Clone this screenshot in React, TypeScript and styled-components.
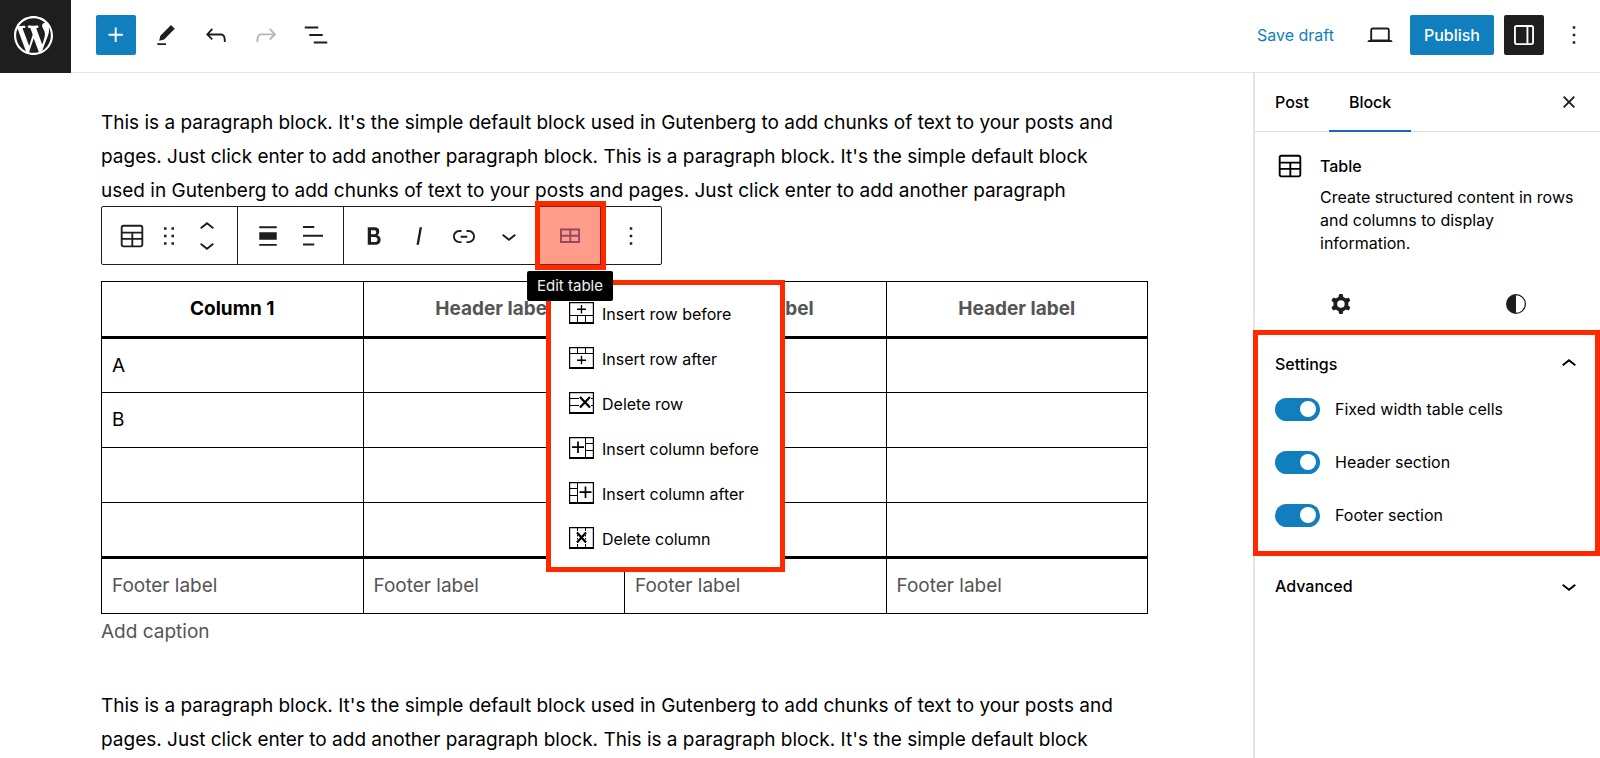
import React from "react";
import styled, { createGlobalStyle, css } from "styled-components";

const color = {
  ink: "#1e1e1e",
  text: "#000",
  muted: "#555",
  line: "#e4e4e4",
  accent: "#117ebd",
  pressed: "#3a62b4",
  mark: "#ff2900",
};

const GlobalStyle = createGlobalStyle`
  *, *::before, *::after { box-sizing: border-box; }
  body {
    margin: 0;
    background: #fff;
    color: ${color.text};
    font-family: Inter, "Noto Sans", sans-serif;
    font-size: 16px;
  }
  button, input { font: inherit; color: inherit; }
`;

/* ---------- icons ---------- */

const Svg = styled.svg<{ $size?: number }>`
  display: block;
  flex: none;
  width: ${(p) => p.$size ?? 30}px;
  height: ${(p) => p.$size ?? 30}px;
  fill: currentColor;
`;

const paths = {
  plus: "M11 12.5V17.5H12.5V12.5H17.5V11H12.5V6H11V11H6V12.5H11Z",
  edit: "m19 7-3-3-8.5 8.5-1 4 4-1L19 7Zm-7 11.5H5V20h7v-1.5Z",
  undo: "M18.3 11.7c-.6-.6-1.4-.9-2.3-.9H6.7l2.9-3.3-1.1-1-4.5 5L8.5 16l1-1-2.7-2.7H16c.5 0 .9.2 1.3.5 1 1 1 3.4 1 4.5v.3h1.5v-.2c0-1.5 0-4.3-1.5-5.7z",
  redo: "M15.6 6.5l-1.1 1 2.9 3.3H8c-.9 0-1.7.3-2.3.9-1.4 1.5-1.4 4.2-1.4 5.6v.2h1.5v-.3c0-1.1 0-3.5 1-4.5.3-.3.7-.5 1.3-.5h9.2L14.5 15l1.1 1.1 4.6-4.6-4.6-5z",
  outline: "M13.8 5.2H3v1.5h10.8V5.2zm-3.6 12v1.5H21v-1.5H10.2zm7.2-6H6.6v1.5h10.8v-1.5z",
  laptop: "M20.5 16h-.7V8c0-1.1-.9-2-2-2H6.2c-1.1 0-2 .9-2 2v8h-.7c-.8 0-1.5.7-1.5 1.5h20c0-.8-.7-1.5-1.5-1.5zM5.7 8c0-.3.2-.5.5-.5h11.6c.3 0 .5.2.5.5v7.6H5.7V8z",
  drawer: "M18 4H6c-1.1 0-2 .9-2 2v12c0 1.1.9 2 2 2h12c1.1 0 2-.9 2-2V6c0-1.1-.9-2-2-2zm-4 14.5H6c-.3 0-.5-.2-.5-.5V6c0-.3.2-.5.5-.5h8v13zm4.5-.5c0 .3-.2.5-.5.5h-2.5v-13H18c.3 0 .5.2.5.5v12z",
  more: "M13 19h-2v-2h2v2zm0-6h-2v-2h2v2zm0-6h-2V5h2v2z",
  close: "M12 13.06l3.712 3.713 1.061-1.06L13.061 12l3.712-3.712-1.06-1.06L12 10.938 8.288 7.227l-1.061 1.06L10.939 12l-3.712 3.712 1.06 1.061L12 13.061z",
  blockTable: "M19 3H5c-1.1 0-2 .9-2 2v14c0 1.1.9 2 2 2h14c1.1 0 2-.9 2-2V5c0-1.1-.9-2-2-2zM5 4.5h14c.3 0 .5.2.5.5v3.5h-15V5c0-.3.2-.5.5-.5zm8 5.5h6.5v3.5H13V10zm-1.5 3.5h-7V10h7v3.5zm-7 5.5v-4h7v4.5H5c-.3 0-.5-.2-.5-.5zm14.5.5h-6V15h6.5v4c0 .3-.2.5-.5.5z",
  editTable: "M4 6v11.5h16V6H4zm1.5 1.5h6V11h-6V7.5zm0 8.5v-3.5h6V16h-6zm13 0H13v-3.5h5.5V16zM13 11V7.5h5.5V11H13z",
  drag: "M8 7h2V5H8v2zm0 6h2v-2H8v2zm0 6h2v-2H8v2zm6-14v2h2V5h-2zm0 8h2v-2h-2v2zm0 6h2v-2h-2v2z",
  up: "M6.5 12.4L12 8l5.5 4.4-.9 1.2L12 10l-4.5 3.6-1-1.2z",
  down: "M17.5 11.6L12 16l-5.5-4.4.9-1.2L12 14l4.5-3.6 1 1.2z",
  alignNone: "M5 15h14V9H5v6zm0 4.8h14v-1.5H5v1.5zM5 4.2v1.5h14V4.2H5z",
  alignLeft: "M13 5.5H4V4h9v1.5Zm7 7H4V11h16v1.5Zm-7 7H4V18h9v1.5Z",
  bold: "M14.7 11.3c1-.6 1.5-1.6 1.5-3 0-2.3-1.3-3.4-4-3.4H7v14h5.8c1.4 0 2.5-.3 3.3-1 .8-.7 1.2-1.7 1.2-2.9.1-1.9-.8-3.1-2.6-3.7zm-5.1-4h2.3c.6 0 1.1.1 1.4.4.3.3.5.7.5 1.2s-.2 1-.5 1.2c-.3.3-.8.4-1.4.4H9.6V7.3zm4.6 9c-.4.3-1 .4-1.7.4H9.6v-3.9h2.9c.7 0 1.3.2 1.7.5.4.3.6.8.6 1.5s-.2 1.2-.6 1.5z",
  italic: "M12.5 5L10 19h1.9l2.5-14z",
  link: "M15.6 7.2H14v1.5h1.6c2 0 3.7 1.7 3.7 3.7s-1.7 3.7-3.7 3.7H14v1.5h1.6c2.8 0 5.2-2.3 5.2-5.2 0-2.9-2.3-5.2-5.2-5.2zM4.7 12.4c0-2 1.7-3.7 3.7-3.7H10V7.2H8.4c-2.9 0-5.2 2.3-5.2 5.2 0 2.9 2.3 5.2 5.2 5.2H10v-1.5H8.4c-2 0-3.7-1.7-3.7-3.7zm4.6.9h5.3v-1.5H9.3v1.5z",
  cog: "M10.289 4.836A1 1 0 0111.275 4h1.306a1 1 0 01.987.836l.244 1.466c.787.26 1.503.679 2.108 1.218l1.393-.522a1 1 0 011.216.437l.653 1.13a1 1 0 01-.23 1.273l-1.148.944a6.025 6.025 0 010 2.435l1.149.946a1 1 0 01.23 1.272l-.653 1.13a1 1 0 01-1.216.437l-1.394-.522c-.605.54-1.32.958-2.108 1.218l-.244 1.466a1 1 0 01-.987.836h-1.306a1 1 0 01-.986-.836l-.244-1.466a5.995 5.995 0 01-2.108-1.218l-1.394.522a1 1 0 01-1.217-.436l-.653-1.131a1 1 0 01.23-1.272l1.149-.946a6.026 6.026 0 010-2.435l-1.148-.944a1 1 0 01-.23-1.272l.653-1.131a1 1 0 011.217-.437l1.393.522a5.994 5.994 0 012.108-1.218l.244-1.466zM14.929 12a3 3 0 11-6 0 3 3 0 016 0z",
  contrast: "M12 4a8 8 0 1 0 0 16 8 8 0 0 0 0-16Zm0 1a7 7 0 0 1 0 14V5Z",
};

type IconName = keyof typeof paths;

const Icon = ({ name, size }: { name: IconName; size?: number }) => (
  <Svg viewBox="0 0 24 24" $size={size} aria-hidden="true">
    <path fillRule="evenodd" clipRule="evenodd" d={paths[name]} />
  </Svg>
);

const WordPressLogo = () => (
  <Svg viewBox="0 0 20 20" $size={39} aria-hidden="true">
    <path d="M20 10c0-5.51-4.49-10-10-10C4.48 0 0 4.49 0 10c0 5.52 4.48 10 10 10 5.51 0 10-4.48 10-10zM7.78 15.37L4.37 6.22c.55-.02 1.17-.08 1.17-.08.5-.06.44-1.13-.06-1.11 0 0-1.45.11-2.37.11-.18 0-.37 0-.58-.01C4.12 2.69 6.87 1.11 10 1.11c2.33 0 4.45.87 6.05 2.34-.68-.11-1.65.39-1.65 1.58 0 .74.45 1.36.9 2.1.35.61.55 1.36.55 2.46 0 1.49-1.4 5-1.4 5l-3.03-8.37c.54-.02.82-.17.82-.17.5-.05.44-1.25-.06-1.22 0 0-1.44.12-2.38.12-.87 0-2.33-.12-2.33-.12-.5-.03-.56 1.2-.06 1.22l.92.08 1.26 3.41zM17.41 10c.24-.64.74-1.87.43-4.25.7 1.29 1.05 2.71 1.05 4.25 0 3.29-1.73 6.24-4.4 7.78.97-2.59 1.94-5.2 2.92-7.78zM6.1 18.09C3.12 16.65 1.11 13.53 1.11 10c0-1.3.23-2.48.72-3.59C3.25 10.3 4.67 14.2 6.1 18.09zm4.03-6.63l2.58 6.98c-.86.29-1.76.45-2.71.45-.79 0-1.57-.11-2.29-.33.81-2.38 1.62-4.74 2.42-7.1z" />
  </Svg>
);

const MenuSvg = styled.svg`
  display: block;
  flex: none;
  width: 25px;
  height: 22px;
  fill: none;
  stroke: currentColor;
`;

/* Each glyph sits in the same frame, a box with a heavier bottom edge. */
const menuGlyphs = {
  rowBefore: (
    <>
      <path d="M1 13.5H24M8.5 13.5V20M16.5 13.5V20" />
      <path strokeWidth="1.4" d="M12.5 3V11.5M8 7.3H17" />
    </>
  ),
  rowAfter: (
    <>
      <path d="M1 6.5H24M8.5 1V6.5M16.5 1V6.5" />
      <path strokeWidth="1.4" d="M12.5 8.8V17.3M8 13.2H17" />
    </>
  ),
  rowDelete: (
    <>
      <path d="M1 6.5H10M1 13.5H10M22 6.5H24M22 13.5H24" />
      <path strokeWidth="2.2" d="M11 5L21 15.5M21 5L11 15.5" />
    </>
  ),
  colBefore: (
    <>
      <path d="M16.5 1V20M16.5 6.5H24M16.5 13.5H24" />
      <path strokeWidth="1.7" d="M9 4.5V16M3 10.2H15" />
    </>
  ),
  colAfter: (
    <>
      <path d="M8.5 1V20M1 6.5H8.5M1 13.5H8.5" />
      <path strokeWidth="1.7" d="M16.5 4.5V16M10.5 10.2H22.5" />
    </>
  ),
  colDelete: (
    <>
      <path d="M8.5 1V4M16.5 1V4M8.5 17V20M16.5 17V20" />
      <path strokeDasharray="1.5 1.5" d="M8.5 5V16M16.5 5V16" />
      <path strokeWidth="2.2" d="M8 5.5L17 15.5M17 5.5L8 15.5" />
    </>
  ),
};

const MenuIcon = ({ name }: { name: keyof typeof menuGlyphs }) => (
  <MenuSvg viewBox="0 0 25 22" aria-hidden="true">
    <path strokeWidth="1.2" d="M.6 0V21M24.4 0V21M0 .6H25" />
    <path strokeWidth="2" d="M0 21H25" />
    {menuGlyphs[name]}
  </MenuSvg>
);

/* ---------- shell ---------- */

const Shell = styled.div`
  display: flex;
  flex-direction: column;
  height: 100vh;
  overflow: hidden;
`;

const TopBar = styled.header`
  display: flex;
  align-items: stretch;
  flex: none;
  height: 73px;
`;

const Home = styled.a`
  display: flex;
  align-items: center;
  flex: none;
  width: 71px;
  padding: 0 14px 2px;
  background: ${color.ink};
  color: #fff;
`;

const Tools = styled.div`
  display: flex;
  flex: 1;
  justify-content: space-between;
  padding: 15px 6px 0 25px;
  border-bottom: 1px solid ${color.line};
`;

const ToolGroup = styled.div`
  display: flex;
  gap: 10px;
`;

const bareButton = css`
  display: flex;
  align-items: center;
  justify-content: center;
  padding: 0;
  border: 0;
  background: none;
  cursor: pointer;
`;

const SquareButton = styled.button<{ $tone?: "accent" | "dark" }>`
  ${bareButton}
  width: 40px;
  height: 40px;
  border-radius: 2px;
  color: ${(p) => (p.$tone ? "#fff" : color.ink)};
  background: ${(p) =>
    p.$tone === "accent" ? color.accent : p.$tone === "dark" ? color.ink : "transparent"};
  &:disabled { color: #b8b8b8; cursor: default; }
`;

const TextButton = styled.button<{ $primary?: boolean }>`
  ${bareButton}
  height: 40px;
  padding: 0 ${(p) => (p.$primary ? 14 : 16)}px;
  border-radius: 2px;
  color: ${(p) => (p.$primary ? "#fff" : color.accent)};
  background: ${(p) => (p.$primary ? color.accent : "transparent")};
  font-weight: ${(p) => (p.$primary ? 500 : 400)};
`;

const Body = styled.div`
  display: flex;
  flex: 1;
  min-height: 0;
`;

/* ---------- editor ---------- */

const Canvas = styled.main`
  flex: 1;
  min-width: 0;
  padding: 33px 105px 0 101px;
  overflow: hidden;
  font-size: 19px;
  line-height: 34px;
`;

const Paragraph = styled.p`
  margin: 0;
  padding-right: 20px;
`;

const BlockToolbar = styled.div`
  display: flex;
  position: relative;
  width: max-content;
  height: 59px;
  margin: -2px 0 16px;
  border: 1px solid ${color.ink};
  border-radius: 2px;
  background: #fff;
`;

const ToolbarGroup = styled.div`
  display: flex;
  position: relative;
  padding: 0 8px 0 7px;
  & + & { border-left: 1px solid ${color.ink}; }
`;

const ToolbarButton = styled.button<{ $narrow?: boolean; $pressed?: boolean }>`
  ${bareButton}
  width: ${(p) => (p.$narrow ? 30 : 45)}px;
  height: 57px;
  color: ${(p) => (p.$pressed ? color.pressed : color.ink)};
`;

const Mover = styled.div`
  display: flex;
  flex-direction: column;
  justify-content: center;
  width: 45px;
`;

const MoverButton = styled.button`
  ${bareButton}
  height: 18px;
  overflow: hidden;
  color: ${color.ink};
`;

const Highlight = styled.span`
  position: absolute;
  inset: -6px -6px -6px -5px;
  z-index: 2;
  border: 5px solid ${color.mark};
  background: rgba(255, 41, 0, 0.46);
  background-clip: padding-box;
  pointer-events: none;
`;

const Tooltip = styled.span`
  position: absolute;
  top: 64px;
  left: 50%;
  z-index: 4;
  padding: 0 10px;
  border-radius: 2px;
  background: #000;
  color: #f0f0f0;
  font-size: 15px;
  line-height: 30px;
  white-space: nowrap;
  transform: translateX(-50%);
`;

const Menu = styled.div`
  position: absolute;
  top: 73px;
  left: 6px;
  z-index: 3;
  display: flex;
  flex-direction: column;
  width: 239px;
  padding: 5px 0 7px;
  border: 5px solid ${color.mark};
  background: #fff;
`;

const MenuItem = styled.button`
  ${bareButton}
  justify-content: flex-start;
  gap: 8px;
  height: 45px;
  padding: 0 18px;
  font-size: 16px;
  line-height: 24px;
  white-space: nowrap;
`;

const MenuLabel = styled.span`
  padding-top: 3px;
`;

const Grid = styled.table`
  width: 100%;
  border-collapse: collapse;
  table-layout: fixed;
  th, td {
    height: 55px;
    padding: 9px 10px;
    border: 1px solid #000;
    text-align: left;
    font-weight: 400;
  }
  thead { border-bottom: 3px solid #000; }
  tfoot { border-top: 3px solid #000; }
  th, tfoot td { height: 56px; }
  tfoot td { color: ${color.muted}; }
`;

const HeadCell = styled.th<{ $placeholder?: boolean }>`
  && {
    text-align: center;
    font-weight: 700;
    color: ${(p) => (p.$placeholder ? color.muted : color.text)};
  }
`;

const Caption = styled.p`
  margin: 1px 0 40px;
  color: ${color.muted};
`;

/* ---------- sidebar ---------- */

const Sidebar = styled.aside`
  flex: none;
  width: 347px;
  border-left: 2px solid ${color.line};
`;

const Tabs = styled.div`
  display: flex;
  height: 59px;
  padding-right: 11px;
  border-bottom: 1px solid #ddd;
`;

const Tab = styled.button<{ $active?: boolean }>`
  ${bareButton}
  height: 59px;
  padding: 0 20px 1px;
  font-weight: 500;
  box-shadow: ${(p) => (p.$active ? `inset 0 -2px 0 #1a66b8` : "none")};
`;

const CloseButton = styled(SquareButton)`
  margin: 9px 0 0 auto;
`;

const BlockCard = styled.div`
  display: flex;
  gap: 15px;
  padding: 19px 20px 0;
  line-height: 23px;
`;

const BlockTitle = styled.h2`
  margin: 4px 0 8px;
  font-size: 16px;
  font-weight: 500;
`;

const BlockText = styled.p`
  margin: 0;
`;

const PanelTabs = styled.div`
  display: grid;
  grid-template-columns: 1fr 1fr;
  gap: 4px;
  margin: 22px -2px 0 0;
`;

const PanelTab = styled.button`
  ${bareButton}
  height: 53px;
  color: ${color.ink};
`;

const Panel = styled.section<{ $marked?: boolean }>`
  margin-left: -2px;
  padding: ${(p) => (p.$marked ? "0 11px 20px 17px" : "1px 16px 0 22px")};
  border: ${(p) => (p.$marked ? `5px solid ${color.mark}` : "0")};
`;

const PanelToggle = styled.button`
  ${bareButton}
  justify-content: space-between;
  width: 100%;
  height: 58px;
  font-weight: 500;
`;

const SwitchList = styled.div`
  display: flex;
  flex-direction: column;
  gap: 21px;
`;

const Switch = styled.label`
  display: flex;
  align-items: center;
  gap: 15px;
  height: 32px;
  cursor: pointer;
`;

const SwitchInput = styled.input`
  appearance: none;
  flex: none;
  display: flex;
  align-items: center;
  width: 45px;
  height: 23px;
  margin: 0;
  padding: 0 4px;
  border-radius: 12px;
  background: #949494;
  &::before {
    content: "";
    width: 16px;
    height: 16px;
    border-radius: 50%;
    background: #fff;
  }
  &:checked {
    justify-content: flex-end;
    background: ${color.accent};
  }
`;

/* ---------- content ---------- */

const menuItems: { icon: keyof typeof menuGlyphs; label: string }[] = [
  { icon: "rowBefore", label: "Insert row before" },
  { icon: "rowAfter", label: "Insert row after" },
  { icon: "rowDelete", label: "Delete row" },
  { icon: "colBefore", label: "Insert column before" },
  { icon: "colAfter", label: "Insert column after" },
  { icon: "colDelete", label: "Delete column" },
];

const bodyRows = ["A", "B", "", ""];
const columns = [0, 1, 2, 3];
const switches = ["Fixed width table cells", "Header section", "Footer section"];

export default function App() {
  return (
    <Shell>
      <GlobalStyle />
      <TopBar>
        <Home href="#" aria-label="View posts">
          <WordPressLogo />
        </Home>
        <Tools>
          <ToolGroup>
            <SquareButton $tone="accent" aria-label="Add block"><Icon name="plus" /></SquareButton>
            <SquareButton aria-label="Tools"><Icon name="edit" /></SquareButton>
            <SquareButton aria-label="Undo"><Icon name="undo" /></SquareButton>
            <SquareButton aria-label="Redo" disabled><Icon name="redo" /></SquareButton>
            <SquareButton aria-label="Document overview"><Icon name="outline" /></SquareButton>
          </ToolGroup>
          <ToolGroup>
            <TextButton>Save draft</TextButton>
            <SquareButton aria-label="Preview"><Icon name="laptop" /></SquareButton>
            <TextButton $primary>Publish</TextButton>
            <SquareButton $tone="dark" aria-label="Settings"><Icon name="drawer" /></SquareButton>
            <SquareButton aria-label="Options"><Icon name="more" /></SquareButton>
          </ToolGroup>
        </Tools>
      </TopBar>

      <Body>
        <Canvas>
          <Paragraph>
            This is a paragraph block. It's the simple default block used in Gutenberg to add chunks
            of text to your posts and pages. Just click enter to add another paragraph block. This is
            a paragraph block. It's the simple default block used in Gutenberg to add chunks of text
            to your posts and pages. Just click enter to add another paragraph
          </Paragraph>

          <BlockToolbar role="toolbar" aria-label="Block tools">
            <ToolbarGroup>
              <ToolbarButton aria-label="Table"><Icon name="blockTable" /></ToolbarButton>
              <ToolbarButton $narrow aria-label="Drag"><Icon name="drag" /></ToolbarButton>
              <Mover>
                <MoverButton aria-label="Move up"><Icon name="up" /></MoverButton>
                <MoverButton aria-label="Move down"><Icon name="down" /></MoverButton>
              </Mover>
            </ToolbarGroup>
            <ToolbarGroup>
              <ToolbarButton aria-label="Align"><Icon name="alignNone" /></ToolbarButton>
              <ToolbarButton aria-label="Change column alignment"><Icon name="alignLeft" /></ToolbarButton>
            </ToolbarGroup>
            <ToolbarGroup>
              <ToolbarButton aria-label="Bold"><Icon name="bold" /></ToolbarButton>
              <ToolbarButton aria-label="Italic"><Icon name="italic" /></ToolbarButton>
              <ToolbarButton aria-label="Link"><Icon name="link" /></ToolbarButton>
              <ToolbarButton aria-label="More"><Icon name="down" /></ToolbarButton>
            </ToolbarGroup>
            <ToolbarGroup>
              <ToolbarButton $pressed aria-label="Edit table"><Icon name="editTable" /></ToolbarButton>
              <Highlight />
              <Tooltip role="tooltip">Edit table</Tooltip>
              <Menu>
                {menuItems.map((item) => (
                  <MenuItem key={item.label}>
                    <MenuIcon name={item.icon} />
                    <MenuLabel>{item.label}</MenuLabel>
                  </MenuItem>
                ))}
              </Menu>
            </ToolbarGroup>
            <ToolbarGroup>
              <ToolbarButton aria-label="Options"><Icon name="more" /></ToolbarButton>
            </ToolbarGroup>
          </BlockToolbar>

          <Grid>
            <thead>
              <tr>
                <HeadCell>Column 1</HeadCell>
                <HeadCell $placeholder>Header label</HeadCell>
                <HeadCell $placeholder>Header label</HeadCell>
                <HeadCell $placeholder>Header label</HeadCell>
              </tr>
            </thead>
            <tbody>
              {bodyRows.map((first, row) => (
                <tr key={row}>
                  {columns.map((c) => (
                    <td key={c}>{c === 0 ? first : ""}</td>
                  ))}
                </tr>
              ))}
            </tbody>
            <tfoot>
              <tr>
                {columns.map((c) => (
                  <td key={c}>Footer label</td>
                ))}
              </tr>
            </tfoot>
          </Grid>
          <Caption>Add caption</Caption>

          <Paragraph>
            This is a paragraph block. It's the simple default block used in Gutenberg to add chunks
            of text to your posts and pages. Just click enter to add another paragraph block. This is
            a paragraph block. It's the simple default block
          </Paragraph>
        </Canvas>

        <Sidebar>
          <Tabs>
            <Tab>Post</Tab>
            <Tab $active>Block</Tab>
            <CloseButton aria-label="Close settings"><Icon name="close" /></CloseButton>
          </Tabs>
          <BlockCard>
            <Icon name="blockTable" />
            <div>
              <BlockTitle>Table</BlockTitle>
              <BlockText>
                Create structured content in rows and columns to display information.
              </BlockText>
            </div>
          </BlockCard>
          <PanelTabs>
            <PanelTab aria-label="Settings"><Icon name="cog" /></PanelTab>
            <PanelTab aria-label="Styles"><Icon name="contrast" /></PanelTab>
          </PanelTabs>
          <Panel $marked>
            <PanelToggle aria-expanded="true">
              Settings
              <Icon name="up" />
            </PanelToggle>
            <SwitchList>
              {switches.map((label) => (
                <Switch key={label}>
                  <SwitchInput type="checkbox" role="switch" defaultChecked />
                  {label}
                </Switch>
              ))}
            </SwitchList>
          </Panel>
          <Panel>
            <PanelToggle aria-expanded="false">
              Advanced
              <Icon name="down" />
            </PanelToggle>
          </Panel>
        </Sidebar>
      </Body>
    </Shell>
  );
}
